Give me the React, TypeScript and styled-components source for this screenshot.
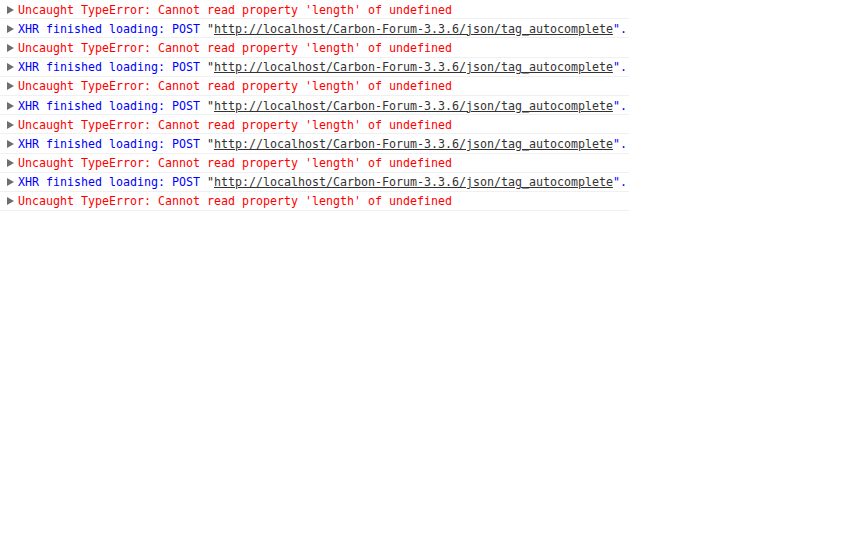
import React from 'react'
import styled, { createGlobalStyle } from 'styled-components'

const GlobalStyle = createGlobalStyle`
  body {
    margin: 0;
    background: #ffffff;
  }
`

const URL = 'http://localhost/Carbon-Forum-3.3.6/json/tag_autocomplete'

type Kind = 'error' | 'xhr'

const entries: Kind[] = [
  'error', 'xhr', 'error', 'xhr', 'error', 'xhr',
  'error', 'xhr', 'error', 'xhr', 'error',
]

const Console = styled.div`
  width: 629px;
  font-family: 'DejaVu Sans Mono', 'Liberation Mono', monospace;
  font-size: 11.63px;
`

const Row = styled.div<{ $kind: Kind }>`
  display: flex;
  align-items: center;
  box-sizing: border-box;
  height: 19.2px;
  padding-top: 1px;
  border-bottom: 1px solid #f0f0f0;
  color: ${({ $kind }) => ($kind === 'error' ? '#ff0000' : '#0000ff')};
  white-space: pre;
`

const Arrow = styled.span`
  width: 0;
  height: 0;
  margin: 0 4px 0 7px;
  border-top: 4.5px solid transparent;
  border-bottom: 4.5px solid transparent;
  border-left: 7px solid #6e6e6e;
`

const Quote = styled.span`
  color: #222222;
`

const Link = styled.span`
  color: #333333;
  text-decoration: underline;
`

const ConsoleRow: React.FC<{ kind: Kind }> = ({ kind }) => (
  <Row $kind={kind}>
    <Arrow />
    {kind === 'error' ? (
      <span>Uncaught TypeError: Cannot read property 'length' of undefined</span>
    ) : (
      <span>
        XHR finished loading: POST <Quote>"</Quote>
        <Link>{URL}</Link>".
      </span>
    )}
  </Row>
)

const App: React.FC = () => {
  return (
    <>
      <GlobalStyle />
      <Console>
        {entries.map((kind, i) => (
          <ConsoleRow key={i} kind={kind} />
        ))}
      </Console>
    </>
  )
}

export default App
